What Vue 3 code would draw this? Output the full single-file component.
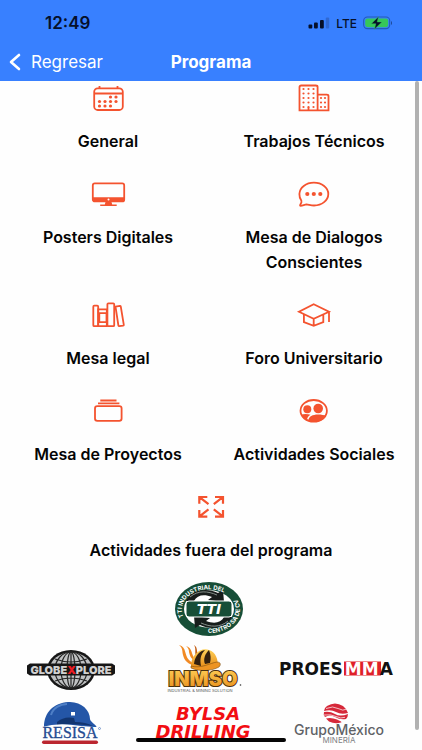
<script setup>
const items = [
  { id: 'calendar', label: 'General' },
  { id: 'building', label: 'Trabajos Técnicos' },
  { id: 'monitor', label: 'Posters Digitales' },
  { id: 'chat', label: 'Mesa de Dialogos Conscientes' },
  { id: 'books', label: 'Mesa legal' },
  { id: 'cap', label: 'Foro Universitario' },
  { id: 'albums', label: 'Mesa de Proyectos' },
  { id: 'people', label: 'Actividades Sociales' },
  { id: 'expand', label: 'Actividades fuera del programa', wide: true },
]
const calendarDots = [
  [20.5, 16], [26, 16],
  [9.5, 20.5], [15, 20.5], [20.5, 20.5], [26, 20.5],
  [9.5, 25], [15, 25], [20.5, 25],
]
const windowRows = [8, 12.5, 17, 21.5, 26]
</script>

<template>
  <div class="screen">
    <header class="header">
      <div class="status">
        <span class="time">12:49</span>
        <div class="status-right">
          <svg width="22" height="12" viewBox="0 0 22 12" aria-hidden="true">
            <rect x="0.5" y="7.5" width="3.8" height="4" rx="1" fill="#06102a" />
            <rect x="6" y="5.5" width="3.8" height="6" rx="1" fill="#06102a" />
            <rect x="12" y="3" width="3.8" height="8.5" rx="1" fill="#06102a" />
            <rect x="17.8" y="0.5" width="3.4" height="11" rx="1" fill="#2f68d2" />
          </svg>
          <span class="network">LTE</span>
          <svg width="30" height="14" viewBox="0 0 30 14" aria-hidden="true">
            <rect x="0.7" y="1" width="26" height="11.6" rx="3.6" fill="none" stroke="#235ab8" stroke-width="1.1" />
            <rect x="2.2" y="2.4" width="23" height="8.8" rx="2.4" fill="#36c759" />
            <path d="M28 5v4c1.3-.5 1.3-3.5 0-4z" fill="#1c4590" />
            <path d="M15.5 0.8 8.2 7.8h4.600l-1.400 5.400 7.500-7.300h-4.700z" fill="#06102a" stroke="#36c759" stroke-width="0.5" />
          </svg>
        </div>
      </div>
      <div class="toolbar">
        <button class="back" type="button">
          <svg width="12" height="18" viewBox="0 0 12 18" aria-hidden="true">
            <path d="M10 2 2 9l8 7" fill="none" stroke="#fff" stroke-width="2.6" stroke-linecap="round" stroke-linejoin="round" />
          </svg>
          <span>Regresar</span>
        </button>
        <h1 class="title">Programa</h1>
      </div>
    </header>

    <main class="content">
      <nav class="menu">
        <a v-for="item in items" :key="item.id" href="#" class="item" :class="{ wide: item.wide }">
          <svg class="icon" width="36" height="34" viewBox="0 0 36 34" aria-hidden="true">
            <g v-if="item.id === 'calendar'">
              <rect x="4.2" y="7.3" width="28.6" height="21.7" rx="3.5" />
              <path d="M4 12.5h29M9.500 5v3M27.500 5v3" />
              <circle v-for="(d, i) in calendarDots" :key="i" class="solid" :cx="d[0]" :cy="d[1]" r="1.6" />
            </g>
            <g v-else-if="item.id === 'building'">
              <path d="M3.500 29.300V6q0-1.500 1.700-1.500h14.600q1.800 0 1.800 1.500v23.300zM21.600 13.700h9.200q1.700 0 1.700 1.500v14.100H21.600" />
              <path d="M12.500 29.500v-3.500" />
              <g v-for="y in windowRows" :key="y">
                <circle v-for="x in [7.5, 12.5, 17.5]" :key="x" class="solid" :cx="x" :cy="y" r="1.1" />
                <template v-if="y > 16">
                  <circle class="solid" cx="25" :cy="y" r="1.100" />
                  <circle class="solid" cx="29" :cy="y" r="1.100" />
                </template>
              </g>
            </g>
            <g v-else-if="item.id === 'monitor'">
              <rect x="2.800" y="6.400" width="31.400" height="18" rx="2" />
              <path class="solid" d="M2.500 20.300h32v2.700q0 2-2 2h-28q-2 0-2-2zM15.500 25h6l.7 2.400h4.500v1.700H10.200v-1.700h4.600z" />
              <circle cx="18.500" cy="22.600" r="1" fill="#fff" class="hole" />
            </g>
            <g v-else-if="item.id === 'chat'">
              <path d="M5.400 23.800C3.900 21.700 3.300 19.400 3.400 17 3.600 10.500 10 5.700 17.900 5.700c8 0 14.400 4.900 14.400 11.300s-6.400 11.500-14.300 11.500c-3 0-5.300-.9-7.400-1.100-2 .1-4.200 1.500-6 1.400-.9-.1-.5-.8-.2-1.300.8-1.300 1.400-2.800 1-3.700z" />
              <circle v-for="x in [11.3, 17.8, 24.3]" :key="x" class="solid" :cx="x" cy="17" r="2.1" />
            </g>
            <g v-else-if="item.id === 'books'">
              <rect x="3.300" y="7.700" width="4.900" height="20.500" rx="1" />
              <path d="M8.200 11.300h8.600v16.900H8.200zM8.800 15.200h8M8.800 24.200h8M9.300 15v9M16.500 15v9" />
              <rect x="17.400" y="5.300" width="6.800" height="22.900" rx="1" />
              <path d="m25.500 8.700 4.400-.8q.8 0 .9.700l3 18.300q.1.700-.6.800l-3.900.5q-.8 0-.9-.7z" />
            </g>
            <g v-else-if="item.id === 'cap'">
              <path d="m17.700 6.200 15.300 7.600-15.300 6.900L3 13.800zM7.900 16v8.100l9.800 3.700 9.600-3.700V16M17.700 20.700v7.100M33 13.800v10.200" />
            </g>
            <g v-else-if="item.id === 'albums'">
              <rect x="5" y="12.200" width="26.600" height="14.600" rx="2.300" />
              <path d="M8 9.300h21.400M10.300 6.500h16.200" />
            </g>
            <g v-else-if="item.id === 'people'">
              <ellipse cx="17.700" cy="16.800" rx="13.200" ry="10.800" />
              <circle class="solid" cx="11.300" cy="15.300" r="4" />
              <circle class="solid" cx="22.200" cy="14.500" r="4.800" />
              <path class="solid" d="M4.800 20.800c3-1.200 6.500-1.200 9.700 0-2.200 1.400-3.300 3-3.600 5.200-2.700-1.100-4.800-2.800-6.100-5.200zM12.200 26.700c.4-4.300 4.500-6.100 9.700-6.200 3.300 0 6.500.5 8.500 1.500-3 4.900-11.300 7.900-18.200 4.700z" />
            </g>
            <g v-else class="bold">
              <path d="M6.300 13.700V7h8M6.500 7.200l9 7M22 7h8v6.700M29.800 7.200l-9 7M6.300 20v6.700h8M6.500 26.400l9-7M22 26.700h8V20M29.800 26.400l-9-7" />
            </g>
          </svg>
          <span class="label">{{ item.label }}</span>
        </a>
      </nav>

      <section class="sponsors">
        <svg class="sponsor wide" width="70" height="56" viewBox="0 0 70 56" role="img" aria-label="TTI Industrial del Centro">
          <defs>
            <path id="arc-top" d="M9.500 36A27 20.500 0 1 1 60 36" />
            <path id="arc-bottom" d="M34 52A31 24 0 0 0 61 15" />
          </defs>
          <ellipse cx="35" cy="28" rx="34" ry="27" fill="#174e37" />
          <ellipse cx="35" cy="28" rx="25" ry="18.800" fill="#fff" />
          <path d="M12 20C17 9 32 6 44 12l5-3 1 12-16-2 4-3c-8-3-15-2-18 4zM58 36C53 47 38 50 26 44l-5 3-1-12 16 2-4 3c8 3 15 2 18-4z" fill="#171d1b" />
          <path d="M16 16C24 9 34 10 43 14M54 40C46 47 36 46 27 42" fill="none" stroke="#85908a" />
          <rect x="12" y="20" width="46" height="16" rx="3" fill="#174e37" stroke="#fff" />
          <text x="35" y="33" class="tti">TTI</text>
          <text class="ring"><textPath href="#arc-top">TTI INDUSTRIAL DEL</textPath></text>
          <text class="ring"><textPath href="#arc-bottom">CENTRO SA DE CV</textPath></text>
        </svg>

        <svg class="sponsor" width="88" height="42" viewBox="0 0 88 42" role="img" aria-label="Globexplore">
          <ellipse cx="44" cy="22" rx="24" ry="20" fill="#161616" />
          <ellipse cx="44" cy="22" rx="21.500" ry="17.700" fill="#bfc1c2" />
          <g fill="none" stroke="#242424" stroke-width="1.200">
            <ellipse cx="44" cy="22" rx="4" ry="18" />
            <ellipse cx="44" cy="22" rx="10" ry="18" />
            <ellipse cx="44" cy="22" rx="16" ry="18" />
            <path d="M44 4v36M28 11q16 6 32 0M28 33q16-6 32 0" />
          </g>
          <path d="M3 15.500h82l3 2v8l-3 2H3l-3-2v-8z" fill="#161616" />
          <text x="44" y="25.500" class="globe">GLOBE<tspan class="globe-x">X</tspan>PLORE</text>
        </svg>

        <svg class="sponsor" width="76" height="50" viewBox="0 0 76 50" role="img" aria-label="INMSO">
          <defs>
            <linearGradient id="gold" x1="0" y1="0" x2="0" y2="1">
              <stop offset="0" stop-color="#ffd25a" />
              <stop offset="1" stop-color="#e78a17" />
            </linearGradient>
          </defs>
          <path d="M13 1c8 2 5 10 10 15 3 3 6 4 8 6-9-1-13-6-14-11-1-4 0-7-4-10zM20 2c7 2 5 9 9 13l3 3c-7-2-8-6-9-10 0-3-1-4-3-6z" fill="#f18a24" />
          <path d="M28 1c5 3 1 8 6 11l-2 3c-5-4-1-9-4-14z" fill="#c4631d" />
          <path d="M25 24C24 11 35 3 43 6c7 2 9 10 9 16z" fill="url(#gold)" />
          <path d="M28 20C29 11 34 7 39 6c-5 5-5 10-4 16zM39 20c-2-5 0-10 4-14 2 5 2 9 1 13z" fill="#33200f" />
          <path d="M25 22c10 3 19-3 26-4 4 0 4 3 2 5-7 4-19 5-28 1z" fill="#ed9423" stroke="#69400d" stroke-width="0.5" />
          <text x="37" y="42" class="inmso">INMSO</text>
          <text x="34" y="48" class="inmso-sub">INDUSTRIAL &amp; MINING SOLUTION</text>
          <circle cx="74.500" cy="41" r="0.800" fill="#333" />
        </svg>

        <svg class="sponsor" width="118" height="20" viewBox="0 0 118 20" role="img" aria-label="PROESMMA">
          <rect x="66" y="2.500" width="37" height="14" fill="#df2029" />
          <text x="1" y="15.500" class="proes">PROES<tspan class="proes-m" dx="2">MM</tspan><tspan dx="1">A</tspan></text>
        </svg>

        <svg class="sponsor" width="62" height="44" viewBox="0 0 62 44" role="img" aria-label="RESISA">
          <path d="M4 26C4 11 14 2 28 1c13-1 22 8 22 17 0 3 6 5 7 9-16 0-34-2-53-1z" fill="#2456a7" />
          <path d="M17 21q7-6 17-4l1 4q11 0 18 4-19-3-36-1z" fill="#123570" />
          <path d="M11 14C13 7 20 3 27 3" stroke="#4e7fc6" stroke-width="2" fill="none" />
          <rect x="31" y="11" width="4" height="3.500" fill="#fff" />
          <path d="M2 26q14-4 31-2t26 2v14H2z" fill="#fefefe" />
          <text x="30" y="36.500" class="resisa">RESISA</text>
          <circle cx="59.500" cy="27.500" r="1" fill="none" stroke="#2456a7" stroke-width="0.5" />
          <rect x="2" y="39.500" width="56" height="3.500" rx="1.700" fill="#bb2630" />
        </svg>

        <svg class="sponsor" width="108" height="38" viewBox="0 0 108 38" role="img" aria-label="BYLSA Drilling">
          <text x="58" y="16" class="bylsa">BYLSA</text>
          <text x="53" y="34" class="bylsa">DRILLING</text>
        </svg>

        <svg class="sponsor" width="98" height="44" viewBox="0 0 98 44" role="img" aria-label="Grupo México Minería">
          <path d="M39 5q8-5 16 0 4 3 5 7-7 2-12-1t-12-1q0-3 3-5z" fill="#d62839" />
          <path d="M36 11q6-1 11 2t13 0q0 3-2 5-6 1-11-2t-10 0q-2-2-1-5z" fill="#d62839" />
          <path d="M38 17.500q5-1.500 11 1t4 3q-6 2-12-1z" fill="#d62839" />
          <path d="M38 7.500q7-3 12 0t9 .5M36 14q7-1 12 1.500t9 .8" fill="none" stroke="#fff" stroke-width="0.700" />
          <text x="51" y="34" class="grupo">GrupoMéxico</text>
          <text x="51" y="42" class="mineria">MINERÍA</text>
        </svg>
      </section>
      <div class="scrollbar"></div>
    </main>
    <div class="home-indicator"></div>
  </div>
</template>

<style>
body {
  background: #fefefe;
}
</style>

<style scoped>
.screen {
  position: relative;
  display: flex;
  flex-direction: column;
  height: 100vh;
  overflow: hidden;
  background: #fefefe;
  color: #050505;
  font-family: Inter, "Liberation Sans", sans-serif;
}
.header {
  flex: none;
  background: #3880ff;
}
.status {
  display: flex;
  align-items: center;
  justify-content: space-between;
  height: 42px;
  padding: 4px 29px 0 45px;
  box-sizing: border-box;
  color: #06102a;
}
.time {
  font-size: 17px;
  font-weight: 600;
}
.status-right {
  display: flex;
  align-items: center;
  gap: 6px;
}
.network {
  font-size: 12px;
  font-weight: 500;
}
.toolbar {
  display: grid;
  grid-template-columns: 1fr auto 1fr;
  align-items: center;
  height: 39px;
  padding: 0 9px;
  color: #fff;
}
.back {
  display: flex;
  align-items: center;
  justify-self: start;
  gap: 10px;
  padding: 0;
  border: 0;
  background: none;
  color: #fff;
  font: 400 17px Inter, sans-serif;
}
.title {
  margin: 0;
  font-size: 17px;
  font-weight: 700;
}
.content {
  position: relative;
  flex: 1;
  min-height: 0;
  overflow: hidden;
}
.menu {
  display: grid;
  grid-template-columns: 1fr 1fr;
  row-gap: 23px;
  padding: 0 5px;
}
.item {
  display: flex;
  flex-direction: column;
  align-items: center;
  gap: 14px;
  color: inherit;
  text-decoration: none;
}
.wide {
  grid-column: 1 / -1;
}
.icon {
  fill: none;
  stroke: #f4532f;
  stroke-width: 1.8;
}
.icon .solid {
  fill: #f4532f;
  stroke: none;
}
.icon .hole {
  stroke: none;
}
.icon .bold {
  stroke-width: 2.2;
}
.label {
  max-width: 180px;
  font-size: 16px;
  font-weight: 600;
  line-height: 25px;
  text-align: center;
}
.wide .label {
  max-width: none;
}
.sponsors {
  display: grid;
  grid-template-columns: repeat(3, 1fr);
  place-items: center;
  row-gap: 7px;
  padding: 18px 18px 0 4px;
}
.sponsor.wide {
  margin-left: 10px;
}
text {
  font-family: Inter, "Liberation Sans", sans-serif;
  text-anchor: middle;
}
.tti {
  fill: #fff;
  font-family: "DejaVu Sans", sans-serif;
  font-size: 14px;
  font-style: italic;
  font-weight: 700;
}
.ring {
  fill: #fff;
  font-size: 6px;
  font-weight: 700;
  text-anchor: start;
}
.globe {
  fill: #d0d0d0;
  font-size: 11px;
  font-weight: 900;
}
.globe-x {
  fill: #ed1c24;
}
.inmso {
  fill: url(#gold);
  stroke: #4a300d;
  stroke-width: 2px;
  paint-order: stroke;
  font-size: 20px;
  font-weight: 900;
}
.inmso-sub {
  fill: #555;
  font-size: 4px;
}
.proes {
  fill: #111;
  font-family: "DejaVu Sans", sans-serif;
  font-size: 17px;
  font-weight: 700;
  text-anchor: start;
}
.proes-m {
  fill: #fff;
}
.resisa {
  fill: #244b91;
  stroke: #244b91;
  stroke-width: 0.3px;
  font-family: "Liberation Serif", serif;
  font-size: 16px;
}
.bylsa {
  fill: #f20d12;
  font-family: "DejaVu Sans", sans-serif;
  font-size: 18px;
  font-style: italic;
  font-weight: 700;
}
.grupo {
  fill: #606266;
  font-size: 14px;
  font-weight: 500;
}
.mineria {
  fill: #808285;
  font-size: 8px;
}
.scrollbar {
  position: absolute;
  top: 0;
  right: 3px;
  bottom: 20px;
  width: 4px;
  border-radius: 2px;
  background: #b1b1b1;
}
.home-indicator {
  position: absolute;
  bottom: 8px;
  left: 50%;
  width: 150px;
  height: 4px;
  margin-left: -75px;
  border-radius: 2px;
  background: #050505;
}
</style>
